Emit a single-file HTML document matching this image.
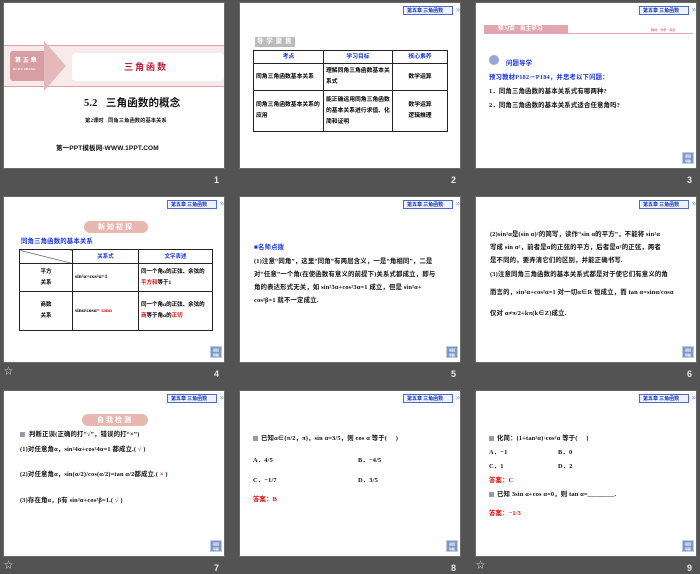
<!DOCTYPE html>
<html><head><meta charset="utf-8"><style>
*{margin:0;padding:0;box-sizing:border-box}
body{width:700px;height:574px;background:#535353;position:relative;overflow:hidden;font-family:"Liberation Serif","Noto Sans CJK SC",sans-serif}
.s{position:absolute;width:222px;height:167px;background:#fff;overflow:hidden;border:1px solid #6a6a6a}
.t{position:absolute;font-weight:bold;font-size:6.4px;white-space:nowrap;color:#111;line-height:1;letter-spacing:0.15px}
.b{color:#1a36d8}.r{color:#e01010}
.hd{position:absolute;left:163px;top:3px;width:50px;height:9px;border:1px solid #4a6ad0;background:#eef2ff;font:bold 5px "Noto Sans CJK SC",sans-serif;color:#1a36b0;padding-left:3px;line-height:7px;white-space:nowrap}
.hd:after{content:"»";position:absolute;right:-8px;top:-1px;color:#8aa0d8;font-size:8px}
.nav{position:absolute;left:206px;top:149px;width:12px;height:12px;background:#7d98c8;border:1px solid #c0cce6;font:bold 3px sans-serif;color:#fff;text-align:center;line-height:5px;padding-top:1px}
.n{position:absolute;color:#e8e8e8;font:bold 9px "Liberation Sans",sans-serif}
.st{position:absolute;color:#ddd;font-size:9px;left:4px}
table{position:absolute;border-collapse:collapse;font-weight:bold;font-size:5.8px}
td{border:1px solid #222;vertical-align:middle;padding:1px 2px;line-height:11px}
.rib{position:absolute;height:12px;background:#e8b7b0;color:#fff;font:bold 7px "Noto Sans CJK SC",sans-serif;text-align:center;line-height:12px;border-radius:6px;letter-spacing:2px}
</style></head><body>

<!-- slide 1 -->
<div class="s" style="left:3px;top:2px">
 <div style="position:absolute;left:0;top:42px;width:222px;height:42px;background:#f8eaea;border-top:1px solid #e0a0a8;border-bottom:1px solid #e0a0a8"></div>
 <div style="position:absolute;left:6px;top:48px;width:40px;height:30px;background:#d79ea4;border-radius:3px"></div>
 <div style="position:absolute;left:40px;top:38px;width:0;height:0;border-top:25px solid transparent;border-bottom:25px solid transparent;border-left:22px solid #e5b8bc"></div>
 <div class="t" style="left:11px;top:55px;color:#fff;font-size:6px">第 五 章</div>
 <div class="t" style="left:9px;top:65px;color:#fff;font-size:3px">DI WU ZHANG</div>
 <div style="position:absolute;left:68px;top:50px;width:152px;height:28px;background:#fff;border-radius:4px"></div>
 <div class="t" style="left:120px;top:59px;color:#c0203a;font-size:9px;letter-spacing:2px;font-family:'Noto Sans CJK SC',sans-serif">三角函数</div>
 <div class="t" style="left:80px;top:96px;font-size:10.5px">5.2&nbsp;&nbsp; 三角函数的概念</div>
 <div class="t" style="left:81px;top:116px;font-size:5.2px">第2课时&nbsp;&nbsp; 同角三角函数的基本关系</div>
 <div class="t" style="left:52px;top:143px;font-size:6.5px;font-family:'Liberation Sans','Noto Sans CJK SC',sans-serif">第一PPT模板网-WWW.1PPT.COM</div>
</div>
<div class="n" style="left:214px;top:175px">1</div>

<!-- slide 2 -->
<div class="s" style="left:239px;top:2px">
 <div class="hd">第五章 三角函数</div>
 <div style="position:absolute;left:15px;top:34px;width:40px;height:10px;background:#bbb"></div>
 <div class="t" style="left:17px;top:36px;color:#fff;letter-spacing:3px">导学聚焦</div>
 <table style="left:13px;top:47px;width:195px">
  <tr style="height:13px"><td style="width:70px;text-align:center;color:#1a36d8;line-height:9px">考点</td><td style="width:69px;text-align:center;color:#1a36d8;line-height:9px">学习目标</td><td style="text-align:center;color:#1a36d8;line-height:9px">核心素养</td></tr>
  <tr style="height:27px"><td>同角三角函数基本关系</td><td>理解同角三角函数基本关系式</td><td style="text-align:center">数学运算</td></tr>
  <tr style="height:41px"><td>同角三角函数基本关系的应用</td><td>能正确运用同角三角函数的基本关系进行求值、化简和证明</td><td style="text-align:center">数学运算<br>逻辑推理</td></tr>
 </table>
</div>
<div class="n" style="left:451px;top:175px">2</div>

<!-- slide 3 -->
<div class="s" style="left:475px;top:2px">
 <div class="hd">第五章 三角函数</div>
 <div style="position:absolute;left:8px;top:22px;width:84px;height:9px;background:#e3a6ae"></div>
 <div class="t" style="left:22px;top:24px;color:#fff;font-size:5.5px">预习案 · 自主学习</div>
 <div style="position:absolute;left:92px;top:30px;width:125px;height:1px;background:#e3a6ae"></div>
 <div class="t" style="left:175px;top:26px;color:#d08080;font-size:3px">教材 · 导学 · 探究</div>
 <div style="position:absolute;left:13px;top:52px;width:10px;height:10px;border-radius:50%;background:#9aa4d6"></div>
 <div class="t b" style="left:30px;top:58px">问题导学</div>
 <div class="t b" style="left:13px;top:72px">预习教材P182－P184，并思考以下问题：</div>
 <div class="t" style="left:13px;top:86px">1．同角三角函数的基本关系式有哪两种?</div>
 <div class="t" style="left:13px;top:100px">2．同角三角函数的基本关系式适合任意角吗?</div>
 <div class="nav">返回<br>导航</div>
</div>
<div class="n" style="left:687px;top:175px">3</div>

<!-- slide 4 -->
<div class="s" style="left:3px;top:196px">
 <div class="hd">第五章 三角函数</div>
 <div class="rib" style="left:80px;top:24px;width:64px">新知初探</div>
 <div class="t b" style="left:17px;top:42px">同角三角函数的基本关系</div>
 <table style="left:15px;top:52px;width:194px;font-size:5.5px">
  <tr style="height:14px"><td style="width:53px;background:linear-gradient(to top right,transparent 48%,#222 50%,transparent 52%)"></td><td style="width:66px;text-align:center;color:#1a36d8;line-height:8px">关系式</td><td style="text-align:center;color:#1a36d8;line-height:8px">文字表述</td></tr>
  <tr style="height:28px"><td style="text-align:center">平方<br>关系</td><td>sin²α+cos²α=1</td><td>同一个角α的正弦、余弦的<span class="r">平方和</span>等于1</td></tr>
  <tr style="height:39px"><td style="text-align:center">商数<br>关系</td><td>sinα/cosα=<span class="r"> tanα </span></td><td>同一个角α的正弦、余弦的<span class="r">商</span>等于角α的<span class="r">正切</span></td></tr>
 </table>
 <div class="nav">返回<br>导航</div>
</div>
<div class="st" style="top:364px">☆</div>
<div class="n" style="left:214px;top:369px">4</div>

<!-- slide 5 -->
<div class="s" style="left:239px;top:196px">
 <div class="hd">第五章 三角函数</div>
 <div class="t b" style="left:14px;top:48px">■名师点拨</div>
 <div class="t" style="left:14px;top:62px">(1)注意“同角”，这里“同角”有两层含义，一是“角相同”，二是</div>
 <div class="t" style="left:14px;top:75px">对“任意”一个角(在使函数有意义的前提下)关系式都成立，即与</div>
 <div class="t" style="left:14px;top:88px">角的表达形式无关，如 sin²3α+cos²3α=1 成立，但是 sin²α+</div>
 <div class="t" style="left:14px;top:101px">cos²β=1 就不一定成立.</div>
 <div class="nav">返回<br>导航</div>
</div>
<div class="n" style="left:451px;top:369px">5</div>

<!-- slide 6 -->
<div class="s" style="left:475px;top:196px">
 <div class="hd">第五章 三角函数</div>
 <div class="t" style="left:14px;top:35px">(2)sin²α是(sin α)²的简写，读作“sin α的平方”，不能将 sin²α</div>
 <div class="t" style="left:14px;top:48px">写成 sin α²，前者是α的正弦的平方，后者是α²的正弦，两者</div>
 <div class="t" style="left:14px;top:61px">是不同的，要弄清它们的区别，并能正确书写.</div>
 <div class="t" style="left:14px;top:75px">(3)注意同角三角函数的基本关系式都是对于使它们有意义的角</div>
 <div class="t" style="left:14px;top:93px">而言的，sin²α+cos²α=1 对一切α∈R 恒成立，而 tan α=sinα/cosα</div>
 <div class="t" style="left:14px;top:114px">仅对 α≠π/2+kπ(k∈Z)成立.</div>
 <div class="nav">返回<br>导航</div>
</div>
<div class="n" style="left:687px;top:369px">6</div>

<!-- slide 7 -->
<div class="s" style="left:3px;top:390px">
 <div class="hd">第五章 三角函数</div>
 <div class="rib" style="left:78px;top:23px;width:66px">自我检测</div>
 <div style="position:absolute;left:16px;top:41px;width:5px;height:5px;background:#99a"></div>
 <div class="t" style="left:25px;top:41px">判断正误(正确的打“√”，错误的打“×”)</div>
 <div class="t" style="left:16px;top:56px">(1)对任意角α，sin²4α+cos²4α=1 都成立.(<span class="r"> √ </span>)</div>
 <div class="t" style="left:16px;top:81px">(2)对任意角α，sin(α/2)/cos(α/2)=tan α/2都成立.(<span class="r"> × </span>)</div>
 <div class="t" style="left:16px;top:107px">(3)存在角α，β有 sin²α+cos²β=1.(<span class="r"> √ </span>)</div>
 <div class="nav">返回<br>导航</div>
</div>
<div class="st" style="top:558px">☆</div>
<div class="n" style="left:214px;top:563px">7</div>

<!-- slide 8 -->
<div class="s" style="left:239px;top:390px">
 <div class="hd">第五章 三角函数</div>
 <div style="position:absolute;left:13px;top:45px;width:5px;height:5px;background:#99a"></div>
 <div class="t" style="left:21px;top:45px">已知α∈(π/2，π)，sin α=3/5，则 cos α 等于(&nbsp;&nbsp;&nbsp;&nbsp;&nbsp;)</div>
 <div class="t" style="left:13px;top:67px">A．4/5</div>
 <div class="t" style="left:118px;top:67px">B．−4/5</div>
 <div class="t" style="left:13px;top:87px">C．−1/7</div>
 <div class="t" style="left:118px;top:87px">D．3/5</div>
 <div class="t r" style="left:13px;top:106px">答案：B</div>
 <div class="nav">返回<br>导航</div>
</div>
<div class="n" style="left:451px;top:563px">8</div>

<!-- slide 9 -->
<div class="s" style="left:475px;top:390px">
 <div class="hd">第五章 三角函数</div>
 <div style="position:absolute;left:13px;top:45px;width:5px;height:5px;background:#99a"></div>
 <div class="t" style="left:21px;top:45px">化简：(1+tan²α)·cos²α 等于(&nbsp;&nbsp;&nbsp;&nbsp;&nbsp;)</div>
 <div class="t" style="left:13px;top:59px">A．−1</div>
 <div class="t" style="left:82px;top:59px">B．0</div>
 <div class="t" style="left:13px;top:73px">C．1</div>
 <div class="t" style="left:82px;top:73px">D．2</div>
 <div class="t r" style="left:13px;top:87px">答案：C</div>
 <div style="position:absolute;left:13px;top:101px;width:5px;height:5px;background:#99a"></div>
 <div class="t" style="left:21px;top:101px">已知 3sin α+cos α=0，则 tan α=________.</div>
 <div class="t r" style="left:13px;top:120px">答案：−1/3</div>
 <div class="nav">返回<br>导航</div>
</div>
<div class="st" style="left:476px;top:558px">☆</div>
<div class="n" style="left:687px;top:563px">9</div>

</body></html>
